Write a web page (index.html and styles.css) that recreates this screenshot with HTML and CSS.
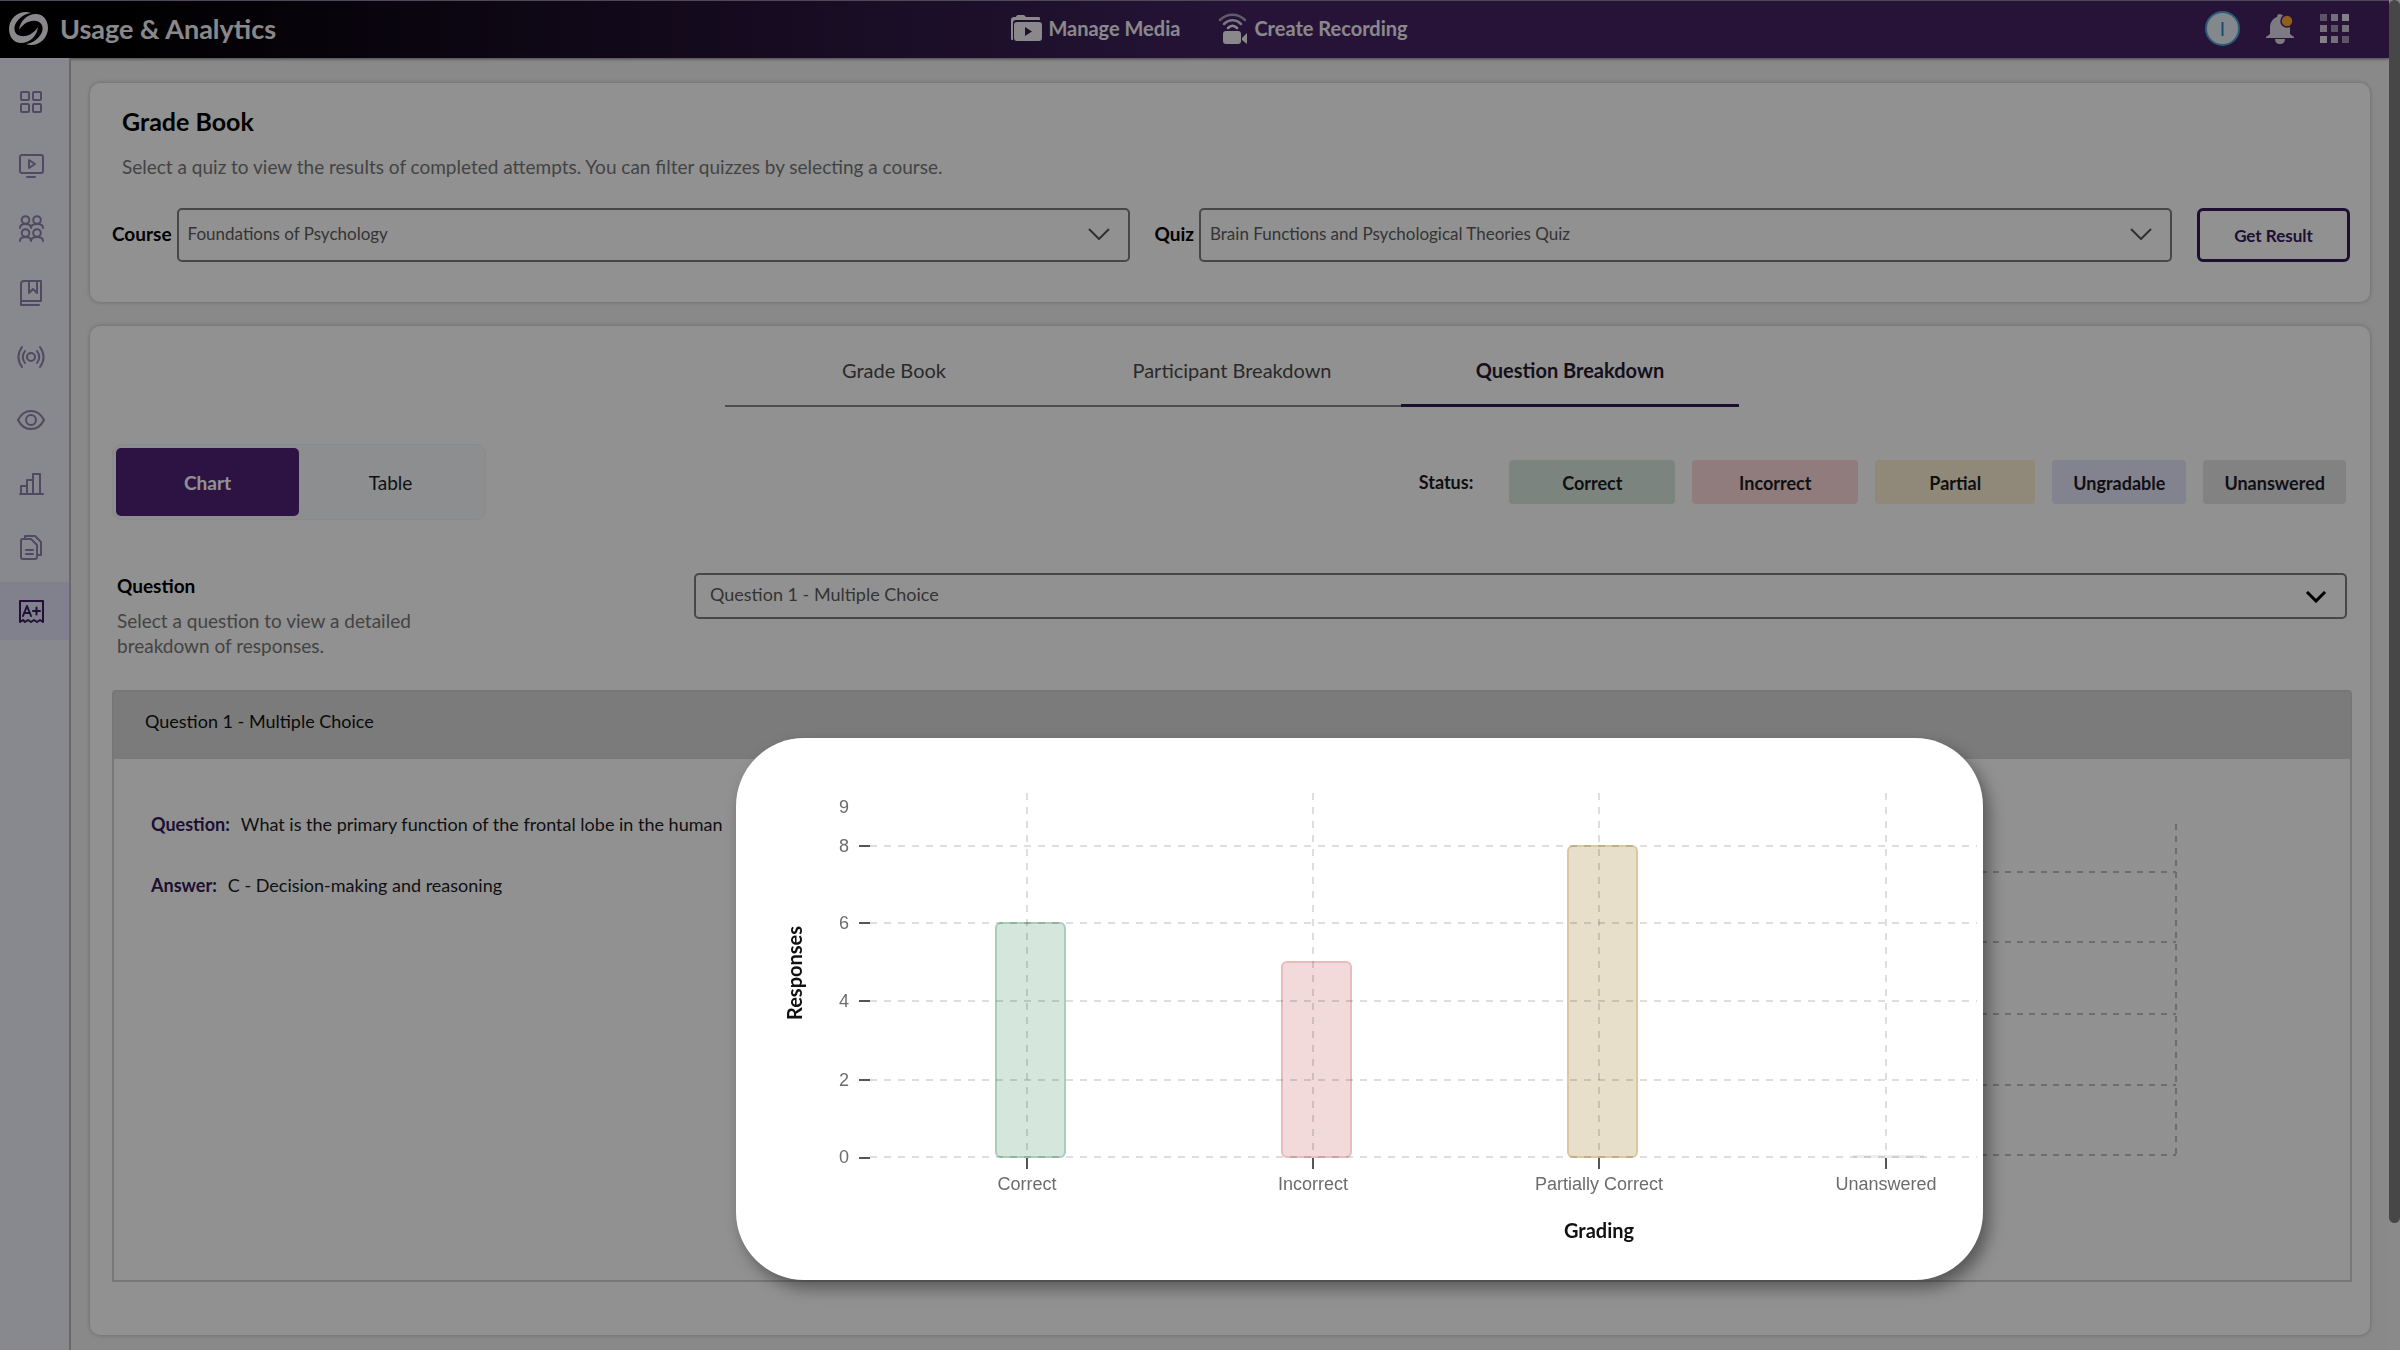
FILE: index.html
```html
<!DOCTYPE html>
<html lang="en">
<head>
    <meta charset="UTF-8">
    <meta name="viewport" content="width=device-width, initial-scale=1.0">
    <title>Usage &amp; Analytics - Grade Book</title>
    <link rel="stylesheet" href="styles.css">
</head>
<body>
    <div class="page">
        <header class="topbar">
            <div class="brand">
                <svg width="40" height="36" viewBox="0 0 40 36" fill="currentColor">
                    <path id="swirl" d="M22 2C12-2 0 6 0 18c0 8 5 14 12 14 9 0 16-7 17-16-4 6-10 10-17 9C5 24 4 17 7 12 10 7 15 3 22 2z"/>
                    <use href="#swirl" transform="rotate(180 19.500 17.500)"/>
                </svg>
                <span class="brand-name">Usage &amp; Analytics</span>
            </div>
            <nav class="top-links">
                <a href="#">
                    <svg width="31" height="27" viewBox="0 0 31 27" fill="currentColor">
                        <path d="M0 24V5c0-2 1-3 3-3h2c0-1 1-2 2-2h6l2 2h13c1 0 1 1 1 3H5C3 5 2 6 2 8v17c-1 0-2 0-2-1z"/>
                        <path fill-rule="evenodd" d="M6 7h22c2 0 3 1 3 3v13c0 2-1 3-3 3H6c-2 0-3-1-3-3V10c0-2 1-3 3-3zm8 5v9l7-4.500z"/>
                    </svg>
                    Manage Media
                </a>
                <a href="#">
                    <svg width="30" height="32" viewBox="0 0 30 32">
                        <g fill="none" stroke="currentColor" stroke-width="2.500" stroke-linecap="round">
                            <path d="M2 7c7-7 18-7 25 0" opacity="0.600"/>
                            <path d="M6 11c5-5 12-5 17 0" opacity="0.850"/>
                            <path d="M10 15c3-3 6-3 9 0"/>
                        </g>
                        <rect x="5" y="18" width="18" height="13" rx="3" fill="currentColor"/>
                        <path d="M24 25l5-5v11l-5-4z" fill="currentColor"/>
                    </svg>
                    Create Recording
                </a>
            </nav>
            <div class="top-tools">
                <button class="avatar" type="button">I</button>
                <button class="icon-btn" type="button" aria-label="Notifications">
                    <svg width="28" height="30" viewBox="0 0 28 30">
                        <path fill="#dcd6e6" d="M14 0c-2 0-3 1-3 3C6 5 4 9 4 14v6l-4 3v1h28v-1l-4-3v-6C24 7 19 2 14 0zM9 25h10c0 3-2 5-5 5s-5-2-5-5z"/>
                        <circle cx="21" cy="7" r="6" fill="#f9a536" stroke="#432362" stroke-width="1.500"/>
                    </svg>
                </button>
                <button class="icon-btn" type="button" aria-label="Apps">
                    <svg width="30" height="30" viewBox="0 0 30 30" fill="#e6e1ee">
                        <rect x="0" y="0" width="7" height="7" opacity="0.600"/>
                        <rect x="11" y="0" width="7" height="7" opacity="0.850"/>
                        <rect x="22" y="0" width="7" height="7"/>
                        <rect x="0" y="11" width="7" height="7" opacity="0.850"/>
                        <rect x="11" y="11" width="7" height="7" opacity="0.600"/>
                        <rect x="22" y="11" width="7" height="7" opacity="0.850"/>
                        <rect x="0" y="22" width="7" height="7"/>
                        <rect x="11" y="22" width="7" height="7" opacity="0.850"/>
                        <rect x="22" y="22" width="7" height="7" opacity="0.600"/>
                    </svg>
                </button>
            </div>
        </header>

        <div class="layout">
            <nav class="sidebar">
                <div class="side-links">
                    <a href="#" aria-label="Dashboard">
                        <svg width="30" height="30" viewBox="0 0 30 30"><rect x="5" y="5" width="8" height="8" rx="1"/><rect x="17" y="5" width="8" height="8" rx="1"/><rect x="5" y="17" width="8" height="8" rx="1"/><rect x="17" y="17" width="8" height="8" rx="1"/></svg>
                    </a>
                    <a href="#" aria-label="Media">
                        <svg width="30" height="30" viewBox="0 0 30 30"><rect x="4" y="4" width="23" height="18" rx="2"/><path d="M13 9v8l6-4zM11 26h8"/></svg>
                    </a>
                    <a href="#" aria-label="Groups">
                        <svg width="30" height="30" viewBox="0 0 30 30"><circle cx="9.500" cy="6" r="3.800"/><circle cx="21" cy="6" r="3.800"/><circle cx="9.500" cy="19" r="3.800"/><circle cx="21" cy="19" r="3.800"/><path d="M4 14c0-3 2-4 5.500-4s5.500 1 5.500 4c0-3 2-4 6-4s6 1 6 4M4 27c0-3 2-4 5.500-4s5.500 1 5.500 4c0-3 2-4 6-4s6 1 6 4"/></svg>
                    </a>
                    <a href="#" aria-label="Playlists">
                        <svg width="30" height="30" viewBox="0 0 30 30"><path d="M25 23V3H8C6 3 5 4 5 6v20M25 23H5v4h18M13 3v12l4-4 4 4V3"/></svg>
                    </a>
                    <a href="#" aria-label="Live">
                        <svg width="30" height="30" viewBox="0 0 30 30"><circle cx="15" cy="15" r="4"/><path d="M9 9c-3 4-3 8 0 12M21 9c3 4 3 8 0 12M6 5c-5 7-5 13 0 20M24 5c5 7 5 13 0 20"/></svg>
                    </a>
                    <a href="#" aria-label="Views">
                        <svg width="30" height="30" viewBox="0 0 30 30"><path d="M2 15C8 3 22 3 28 15 22 27 8 27 2 15z"/><circle cx="15" cy="15" r="5"/></svg>
                    </a>
                    <a href="#" aria-label="Analytics">
                        <svg width="30" height="30" viewBox="0 0 30 30"><path d="M4 25h23M5 25v-8h6M11 25V11h6M17 25V5h7v20"/></svg>
                    </a>
                    <a href="#" aria-label="Reports">
                        <svg width="30" height="30" viewBox="0 0 30 30"><path d="M6 7h9l6 6v12c0 1-1 2-2 2H7c-1 0-2-1-2-2V8zM9 7V4h10l6 6v13h-4M10 18h7M10 22h7"/></svg>
                    </a>
                    <a href="#" class="active" aria-label="Grade Book">
                        <svg width="30" height="30" viewBox="0 0 30 30"><path d="M4 26V5h23v21l-3-2-3 2-3-2-3 2-3-2-3 2-2-2zM7 20l4-10 4 10M8 17h6M17 15h7M20.500 11.500v7"/></svg>
                    </a>
                </div>
            </nav>

            <main class="content">
                <section class="card filters">
                    <h1>Grade Book</h1>
                    <p class="hint">Select a quiz to view the results of completed attempts. You can filter quizzes by selecting a course.</p>
                    <form class="filter-row">
                        <div class="field">
                            <label for="course">Course</label>
                            <div class="select-box">
                                <select id="course"><option>Foundations of Psychology</option></select>
                                <svg width="22" height="12" viewBox="0 0 22 12"><path d="M1 1l10 10L21 1"/></svg>
                            </div>
                        </div>
                        <div class="field">
                            <label for="quiz">Quiz</label>
                            <div class="select-box">
                                <select id="quiz"><option>Brain Functions and Psychological Theories Quiz</option></select>
                                <svg width="22" height="12" viewBox="0 0 22 12"><path d="M1 1l10 10L21 1"/></svg>
                            </div>
                        </div>
                        <button class="get-result" type="button">Get Result</button>
                    </form>
                </section>

                <section class="card breakdown">
                    <div class="tabs" role="tablist">
                        <button type="button" role="tab">Grade Book</button>
                        <button type="button" role="tab">Participant Breakdown</button>
                        <button type="button" role="tab" class="active">Question Breakdown</button>
                    </div>

                    <div class="view-row">
                        <div class="switch">
                            <button type="button" class="active">Chart</button>
                            <button type="button">Table</button>
                        </div>
                        <div class="legend">
                            <span class="legend-title">Status:</span>
                            <span class="chip wide correct">Correct</span>
                            <span class="chip wide incorrect">Incorrect</span>
                            <span class="chip wide partial">Partial</span>
                            <span class="chip ungradable">Ungradable</span>
                            <span class="chip unanswered">Unanswered</span>
                        </div>
                    </div>

                    <div class="question-row">
                        <div class="question-label">
                            <label for="question">Question</label>
                            <p>Select a question to view a detailed breakdown of responses.</p>
                        </div>
                        <div class="select-box bold">
                            <select id="question"><option>Question 1 - Multiple Choice</option></select>
                            <svg width="22" height="12" viewBox="0 0 22 12"><path d="M2 1l9 9 9-9"/></svg>
                        </div>
                    </div>

                    <div class="panel">
                        <h2>Question 1 - Multiple Choice</h2>
                        <div class="panel-body">
                            <dl>
                                <div><dt>Question:</dt><dd>What is the primary function of the frontal lobe in the human</dd></div>
                                <div><dt>Answer:</dt><dd>C - Decision-making and reasoning</dd></div>
                            </dl>
                            <svg class="grid-lines" width="220" height="334" viewBox="0 0 220 334">
                                <path d="M0 49H219M0 119H219M0 191H219M0 262H219M0 332H219M219 1V332"/>
                            </svg>
                        </div>

                        <!-- enlarged chart -->
                        <div class="spotlight">
                            <svg viewBox="0 0 1247 542" class="chart">
                                <g class="bars">
                                    <rect class="bar-correct" x="260" y="185" width="69" height="234" rx="5"/>
                                    <rect class="bar-incorrect" x="546" y="224" width="69" height="195" rx="5"/>
                                    <rect class="bar-partial" x="832" y="108" width="69" height="311" rx="5"/>
                                    <rect class="bar-unanswered" x="1118" y="418" width="69" height="1"/>
                                </g>
                                <g class="grid">
                                    <path d="M134 108H1241M134 185H1241M134 263H1241M134 342H1241M134 419H1241"/>
                                    <path d="M291 55V419M577 55V419M863 55V419M1150 55V419"/>
                                </g>
                                <path class="ticks" d="M123 108H134M123 185H134M123 263H134M123 342H134M123 420H134M291 420V431M577 420V431M863 420V431M1150 420V431"/>
                                <g class="tick-text">
                                    <text x="108" y="75">9</text>
                                    <text x="108" y="114">8</text>
                                    <text x="108" y="191">6</text>
                                    <text x="108" y="269">4</text>
                                    <text x="108" y="348">2</text>
                                    <text x="108" y="425">0</text>
                                    <text x="291" y="452">Correct</text>
                                    <text x="577" y="452">Incorrect</text>
                                    <text x="863" y="452">Partially Correct</text>
                                    <text x="1150" y="452">Unanswered</text>
                                </g>
                                <text class="axis-title" x="863" y="500">Grading</text>
                                <text class="axis-title" transform="translate(66 235) rotate(-90)">Responses</text>
                            </svg>
                        </div>
                    </div>
                </section>
            </main>
        </div>
    </div>
    <div class="scrollbar"><div class="thumb"></div></div>
    <div class="scrim"></div>
</body>
</html>
```
FILE: styles.css
```css
* {
    box-sizing: border-box;
}

body {
    margin: 0;
    min-height: 100vh;
    display: flex;
    background: #f1f1f1;
    font-family: Lato, "Liberation Sans", sans-serif;
    font-size: 19px;
    line-height: 25px;
    color: #1c1c24;
}

button,
select {
    font: inherit;
    color: inherit;
}

button {
    border: none;
    background: none;
    padding: 0;
    cursor: pointer;
}

h1,
h2,
p,
dl,
dd {
    margin: 0;
}

.page {
    flex: 1;
    min-width: 0;
    display: flex;
    flex-direction: column;
}

/* top bar */
.topbar {
    display: flex;
    align-items: center;
    height: 58px;
    padding: 0 39px 2px 9px;
    border-top: 1px solid #8d7f9c;
    background: linear-gradient(90deg, #000 4%, #432362 52%);
    box-shadow: 0 1px 3px rgba(0, 0, 0, 0.5);
    color: #f2f0f5;
}

.brand,
.top-tools {
    flex: 1;
    display: flex;
    align-items: center;
}

.brand {
    gap: 11px;
}

.brand-name {
    font-size: 27px;
    font-weight: bold;
}

.top-links {
    display: flex;
    gap: 38px;
    padding-left: 60px;
}

.top-links a {
    display: flex;
    align-items: center;
    gap: 6px;
    color: inherit;
    font-size: 20px;
    font-weight: bold;
    text-decoration: none;
}

.top-tools {
    justify-content: flex-end;
    gap: 26px;
}

.icon-btn,
.icon-btn svg {
    display: block;
}

.avatar {
    width: 35px;
    height: 35px;
    border: 2px solid #4fa3d8;
    border-radius: 50%;
    background: #e6f0f6;
    color: #2f80c4;
}

/* sidebar */
.layout {
    flex: 1;
    display: flex;
}

.sidebar {
    width: 71px;
    padding-top: 15px;
    border-right: 2px solid #b9b9b9;
    background: #eef1fa;
}

.side-links {
    display: flex;
    flex-direction: column;
    justify-content: space-between;
    height: 567px;
}

.sidebar a {
    display: flex;
    align-items: center;
    height: 58px;
    padding-left: 16px;
    color: #8f80ad;
}

.sidebar .active {
    background: #e3e3fa;
    color: #3b1c5e;
}

.sidebar svg {
    fill: none;
    stroke: currentColor;
    stroke-width: 2;
    stroke-linejoin: round;
    stroke-linecap: round;
}

.content {
    flex: 1;
    min-width: 0;
    display: flex;
    flex-direction: column;
    gap: 24px;
    padding: 25px 19px 15px;
}

.card {
    border-radius: 10px;
    background: #fff;
    box-shadow: 0 0 4px rgba(0, 0, 0, 0.25);
}

/* filters */
.filters {
    padding: 23px 20px 40px 22px;
}

h1 {
    padding-left: 10px;
    font-size: 25px;
    line-height: 30px;
    color: #000;
}

.hint {
    padding: 18px 0 0 10px;
    color: #777;
}

.filter-row {
    display: flex;
    gap: 25px;
    margin-top: 29px;
}

.field {
    flex: 1;
    display: flex;
    align-items: center;
    gap: 5px;
}

label {
    font-weight: bold;
    color: #000;
}

.field label {
    padding-bottom: 4px;
}

.select-box {
    position: relative;
    flex: 1;
}

.select-box select {
    display: block;
    width: 100%;
    height: 54px;
    padding: 0 50px 3px 9px;
    border: 2px solid #7d7d7d;
    border-radius: 5px;
    background: #fff;
    color: #5c5c5c;
    font-size: 17px;
    appearance: none;
}

.select-box svg {
    position: absolute;
    top: 20px;
    right: 20px;
    fill: none;
    stroke: #555;
    stroke-width: 2;
    pointer-events: none;
}

.get-result {
    width: 153px;
    border: 3px solid #331a59;
    border-radius: 6px;
    color: #331a59;
    font-size: 17px;
    font-weight: bold;
}

/* question breakdown */
.breakdown {
    flex: 1;
    display: flex;
    flex-direction: column;
    padding: 0 18px 53px 22px;
}

.tabs {
    display: flex;
    align-self: center;
    width: 1014px;
    max-width: 100%;
    font-size: 20px;
}

.tabs button {
    flex: 1;
    height: 81px;
    padding-top: 10px;
    border-bottom: 2px solid #8a8a8a;
    color: #4a4a4a;
}

.tabs .active {
    border-bottom: 3px solid #331a59;
    color: #241c30;
    font-weight: bold;
}

.view-row {
    display: flex;
    align-items: center;
    justify-content: space-between;
    margin-top: 37px;
    padding-right: 6px;
}

.switch {
    display: flex;
    padding: 3px;
    border: 1px solid #f0f2f6;
    border-radius: 10px;
    background: #f6f9fd;
}

.switch button {
    width: 183px;
    height: 68px;
    border-radius: 5px;
}

.switch .active {
    background: #4f2377;
    color: #fff;
    font-weight: bold;
}

.legend {
    display: flex;
    align-items: center;
    gap: 17px;
    font-size: 18px;
    font-weight: bold;
}

.legend-title {
    margin-right: 19px;
}

.chip {
    height: 44px;
    padding: 0 21px;
    border-radius: 4px;
    line-height: 46px;
    text-align: center;
}

.wide {
    min-width: 166px;
}

.correct {
    background: #dae9df;
}

.incorrect {
    background: #fedada;
}

.partial {
    min-width: 160px;
    background: #fef0d4;
}

.ungradable {
    background: #e4e6fc;
}

.unanswered {
    background: #e4e4e4;
}

.question-row {
    display: flex;
    align-items: flex-start;
    margin-top: 53px;
    padding: 0 5px;
}

.question-label {
    width: 577px;
}

.question-label p {
    max-width: 310px;
    margin-top: 10px;
    color: #777;
}

.question-label label {
    display: block;
}

.bold select {
    height: 46px;
    padding-left: 14px;
    font-size: 18px;
}

.bold svg {
    top: 18px;
    stroke: #000;
    stroke-width: 3;
}

.panel {
    position: relative;
    flex: 1;
    margin-top: 32px;
    border: 2px solid #d2d2d2;
    border-radius: 4px 4px 0 0;
    font-size: 18px;
}

.panel h2 {
    height: 67px;
    padding: 17px 31px;
    background: #d8d8d8;
    color: #111;
    font-size: 18px;
    font-weight: normal;
    line-height: 25px;
}

.panel-body {
    display: flex;
    justify-content: space-between;
    padding: 53px 173px 0 37px;
}

dl > div {
    display: flex;
    margin-bottom: 36px;
    white-space: nowrap;
}

dt {
    margin-right: 11px;
    color: #331a59;
    font-weight: bold;
}

.grid-lines {
    margin-top: 11px;
    fill: none;
    stroke: #c0c0c0;
    stroke-width: 2;
    stroke-dasharray: 6 6;
}

/* dimmed page and the chart lifted above it */
.scrim {
    position: fixed;
    inset: 0;
    z-index: 10;
    background: rgba(0, 0, 0, 0.43);
    pointer-events: none;
}

.spotlight {
    position: absolute;
    z-index: 20;
    right: 367px;
    bottom: 0;
    width: 1247px;
    border-radius: 68px;
    background: #fff;
    box-shadow: 6px 8px 16px rgba(0, 0, 0, 0.4);
}

.chart {
    display: block;
    width: 100%;
}

.grid {
    fill: none;
    stroke: rgba(0, 0, 0, 0.13);
    stroke-width: 2;
    stroke-dasharray: 7 7;
}

.bars rect {
    stroke-width: 2;
}

.bar-correct {
    fill: #d5e6dc;
    stroke: #a9cdb8;
}

.bar-incorrect {
    fill: #f2dada;
    stroke: #e8bcba;
}

.bar-partial {
    fill: #e8dfca;
    stroke: #dcc8a0;
}

.bar-unanswered {
    stroke: #ededed;
}

.ticks {
    stroke: #555;
    stroke-width: 2;
}

.tick-text {
    fill: #6c6c6c;
    font-family: "Liberation Sans", Arial, sans-serif;
    font-size: 18px;
    text-anchor: middle;
}

.axis-title {
    fill: #111;
    font-size: 20px;
    font-weight: bold;
    text-anchor: middle;
}

.scrollbar {
    width: 11px;
    background: #f3f3f3;
}

.thumb {
    height: 1223px;
    border-radius: 6px;
    background: #7d7d7d;
}
```
